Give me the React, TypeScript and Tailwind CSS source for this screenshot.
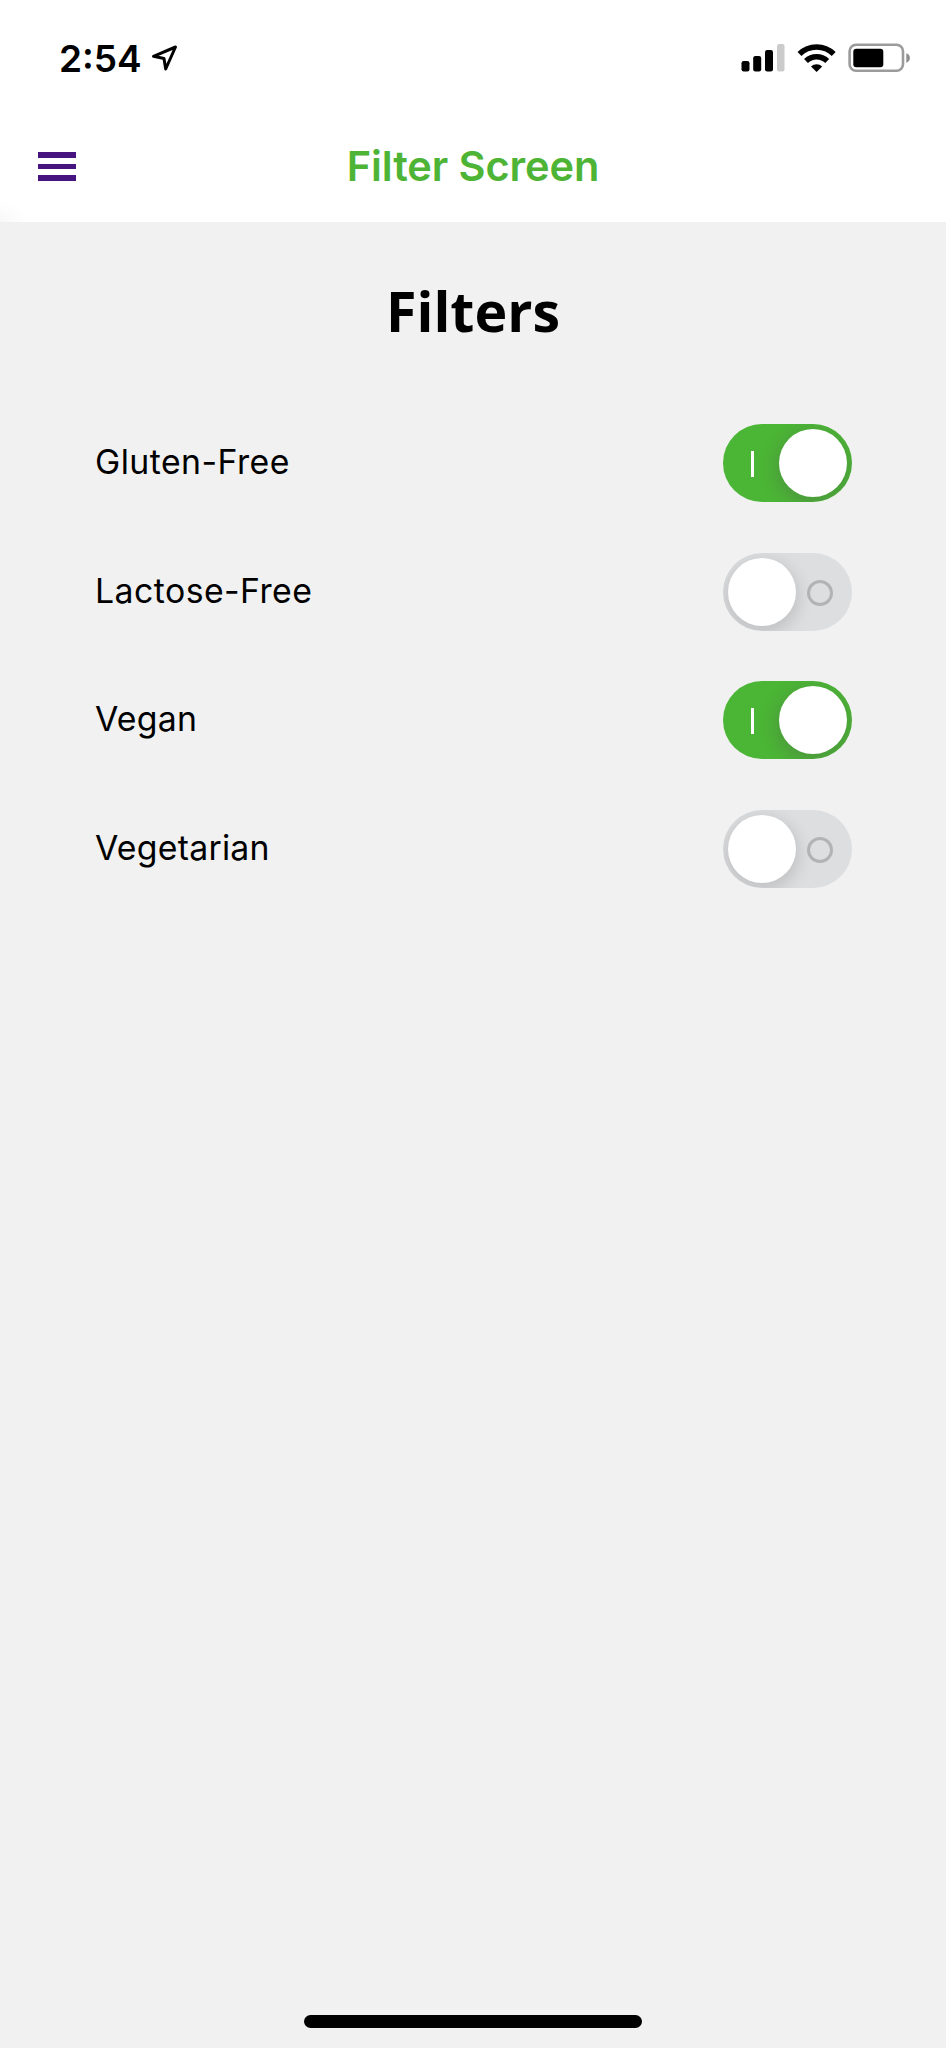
import { useState } from "react";

const initialFilters = [
  { name: "Gluten-Free", on: true },
  { name: "Lactose-Free", on: false },
  { name: "Vegan", on: true },
  { name: "Vegetarian", on: false },
];

function Toggle({ label, on, onChange }: { label: string; on: boolean; onChange: () => void }) {
  return (
    <button
      role="switch"
      aria-checked={on}
      aria-label={label}
      onClick={onChange}
      className={
        "flex h-[78px] w-[129px] shrink-0 items-center overflow-hidden rounded-full " +
        (on ? "flex-row-reverse bg-[#4bb535] pr-[5px]" : "bg-[#dddee0] pl-[5px]")
      }
    >
      <span
        className={
          "size-[68px] shrink-0 rounded-full bg-white " +
          (on
            ? "shadow-[0_5px_16px_3px_rgba(80,80,80,0.27)]"
            : "shadow-[0_5px_16px_3px_rgba(0,0,0,0.13)]")
        }
      />
      {on ? (
        <span className="mt-[2px] mr-[25px] h-[26px] w-[3px] bg-white" />
      ) : (
        <span className="mt-[2px] ml-[11px] size-[26px] rounded-full border-3 border-[#b2b3b4]" />
      )}
    </button>
  );
}

function StatusBar() {
  return (
    <div className="flex h-[116px] items-center justify-between pr-[36px] pl-[59px]">
      <div className="flex items-center">
        <span className="w-[82px] text-[37px] leading-none font-semibold whitespace-nowrap">2:54</span>
        <svg className="ml-[10px]" width="28" height="28" viewBox="0 0 28 28" fill="none">
          <path d="M24.5 3 2.5 12.3 13 14.5 14.7 25 24.5 3Z" stroke="#000" strokeWidth="3" strokeLinejoin="round" />
        </svg>
      </div>
      <svg width="170" height="32" viewBox="740 42 170 32">
        <rect x="741.5" y="61" width="8" height="10.5" rx="2.2" />
        <rect x="753.2" y="56" width="8" height="15.5" rx="2.2" />
        <rect x="765" y="50" width="8" height="21.5" rx="2.2" />
        <rect x="777" y="44" width="7.5" height="27.5" rx="2.2" fill="#cbcbcb" />
        <g fill="none" stroke="#000" strokeWidth="5.6">
          <path d="M799.5 54a24.3 24.3 0 0 1 34.2 0" />
          <path d="M806 61a15.2 15.2 0 0 1 21.2 0" />
        </g>
        <path d="M816.6 72l-5.6-5.5a8.2 8.2 0 0 1 11.2 0Z" />
        <rect x="849.6" y="44.8" width="53.4" height="26" rx="6.5" fill="none" stroke="#9b9b9b" strokeWidth="2.6" />
        <rect x="853.3" y="48.8" width="30" height="18.4" rx="3" />
        <path d="M906.3 53.3q3.6 1.3 3.6 4.7t-3.6 4.7Z" fill="#8d8d8d" />
      </svg>
    </div>
  );
}

export default function App() {
  const [filters, setFilters] = useState(initialFilters);
  const toggle = (name: string) =>
    setFilters((items) => items.map((f) => (f.name === name ? { ...f, on: !f.on } : f)));

  return (
    <div className="flex h-[2048px] w-[946px] flex-col bg-[#f1f1f1] font-['Inter','Liberation_Sans',sans-serif] text-black">
      <header className="h-[222px] bg-white bg-[radial-gradient(ellipse_28px_20px_at_0_222px,#f8f8f8_0%,#ffffff_100%)]">
        <StatusBar />
        <div className="grid h-[101px] grid-cols-[1fr_auto_1fr] items-center">
          <button aria-label="Menu" className="ml-[38px] flex w-[38px] flex-col gap-[6px]">
            <span className="h-[5.6px] w-full bg-[#47147f]" />
            <span className="h-[5.6px] w-full bg-[#47147f]" />
            <span className="h-[5.6px] w-full bg-[#47147f]" />
          </button>
          <h1 className="text-[41.5px] leading-none font-semibold tracking-[-0.08px] text-[#4db435]">
            Filter Screen
          </h1>
        </div>
      </header>

      <main className="flex flex-1 flex-col">
        <h2 className="mt-[49px] text-center font-['Open_Sans','Noto_Sans',sans-serif] text-[55.5px] leading-[80px] font-bold">
          Filters
        </h2>
        <ul className="mt-[73px] flex flex-col gap-[50.7px] pr-[94px] pl-[95px]">
          {filters.map((f) => (
            <li key={f.name} className="flex h-[78px] items-center justify-between">
              <span
                className={
                  "pb-[2px] text-[33.8px] leading-none " +
                  (f.name.includes("-") ? "tracking-[0.45px]" : "tracking-[0.25px]")
                }
              >
                {f.name}
              </span>
              <Toggle label={f.name} on={f.on} onChange={() => toggle(f.name)} />
            </li>
          ))}
        </ul>
      </main>

      <footer className="flex justify-center pb-[20px]">
        <div className="h-[13px] w-[338px] rounded-full bg-black" />
      </footer>
    </div>
  );
}
